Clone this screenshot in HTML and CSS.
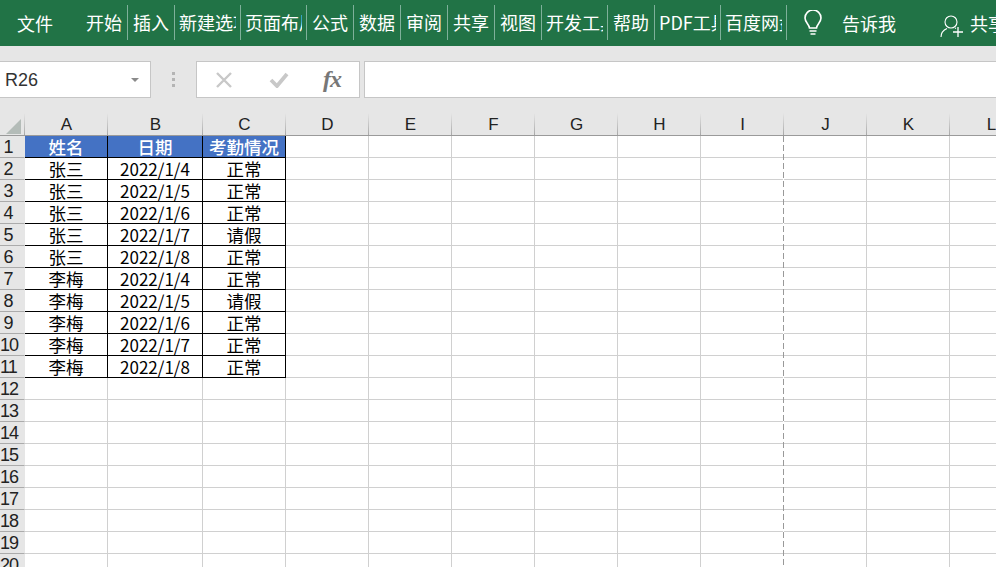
FILE: index.html
```html
<!DOCTYPE html>
<html lang="zh-CN">
<head>
<meta charset="utf-8">
<title>Excel</title>
<link rel="stylesheet" href="styles.css">
</head>
<body>
<header class="ribbon">
  <span class="file-tab">文件</span>
  <nav class="tabs">
    <span class="tab tab-w47"><span class="tab-label">开始</span></span>
    <span class="tab tab-w47"><span class="tab-label">插入</span></span>
    <span class="tab tab-w66"><span class="tab-label">新建选项卡</span></span>
    <span class="tab tab-w66"><span class="tab-label">页面布局</span></span>
    <span class="tab tab-w47"><span class="tab-label">公式</span></span>
    <span class="tab tab-w47"><span class="tab-label">数据</span></span>
    <span class="tab tab-w47"><span class="tab-label">审阅</span></span>
    <span class="tab tab-w47"><span class="tab-label">共享</span></span>
    <span class="tab tab-w47"><span class="tab-label">视图</span></span>
    <span class="tab tab-w66"><span class="tab-label">开发工具</span></span>
    <span class="tab tab-w47"><span class="tab-label">帮助</span></span>
    <span class="tab tab-w66"><span class="tab-label">PDF工具集</span></span>
    <span class="tab tab-w66"><span class="tab-label">百度网盘</span></span>
  </nav>
  <svg class="bulb" viewBox="0 0 20 26" width="20" height="26"><path d="M6.5 18c0-3.500-4.500-5.500-4.500-10a8 8 0 0 1 16 0c0 4.500-4.500 6.500-4.500 10z" fill="none" stroke="#fff" stroke-width="1.600"/><path d="M6.500 21h7M7.500 24h5" stroke="#fff" stroke-width="1.600"/></svg>
  <span class="tell">告诉我</span>
  <svg class="person" viewBox="0 0 24 24" width="24" height="24"><circle cx="11" cy="8" r="6" fill="none" stroke="#fff" stroke-width="1.100"/><path d="M1 23c0-4 2.500-7 6-8.500M15 14l1 .5" fill="none" stroke="#fff" stroke-width="1.100"/><path d="M13 18h10M18 13v10" stroke="#fff" stroke-width="1.300"/></svg>
  <span class="share">共享</span>
</header>
<section class="formula-area">
  <div class="name-box"><span class="name-text">R26</span><span class="caret"></span></div>
  <div class="grip"><i></i><i></i><i></i></div>
  <div class="fx-box">
    <svg class="fx-icon" viewBox="0 0 18 16" width="18" height="16"><path d="M2 1l14 14M16 1L2 15" stroke="#c8c8c8" stroke-width="2.400" fill="none"/></svg>
    <svg class="fx-icon" viewBox="0 0 20 16" width="20" height="16"><path d="M2 8l6 6L18 2" stroke="#c8c8c8" stroke-width="3.800" fill="none"/></svg>
    <span class="fx">fx</span>
  </div>
  <div class="formula-input"></div>
</section>
<main class="sheet">
  <table class="grid">
    <colgroup><col class="c-head"><col class="c-83"><col class="c-95"><col class="c-83"><col class="c-83"><col class="c-83"><col class="c-83"><col class="c-83"><col class="c-83"><col class="c-83"><col class="c-83"><col class="c-83"><col class="c-83"></colgroup>
    <thead><tr><th class="corner"><span class="tri"></span></th><th>A</th><th>B</th><th>C</th><th>D</th><th>E</th><th>F</th><th>G</th><th>H</th><th>I</th><th>J</th><th>K</th><th>L</th></tr></thead>
    <tbody>
      <tr><th>1</th><td class="d t">姓名</td><td class="d t">日期</td><td class="d t">考勤情况</td><td></td><td></td><td></td><td></td><td></td><td></td><td></td><td></td><td></td></tr>
      <tr><th>2</th><td class="d">张三</td><td class="d date">2022/1/4</td><td class="d">正常</td><td></td><td></td><td></td><td></td><td></td><td></td><td></td><td></td><td></td></tr>
      <tr><th>3</th><td class="d">张三</td><td class="d date">2022/1/5</td><td class="d">正常</td><td></td><td></td><td></td><td></td><td></td><td></td><td></td><td></td><td></td></tr>
      <tr><th>4</th><td class="d">张三</td><td class="d date">2022/1/6</td><td class="d">正常</td><td></td><td></td><td></td><td></td><td></td><td></td><td></td><td></td><td></td></tr>
      <tr><th>5</th><td class="d">张三</td><td class="d date">2022/1/7</td><td class="d">请假</td><td></td><td></td><td></td><td></td><td></td><td></td><td></td><td></td><td></td></tr>
      <tr><th>6</th><td class="d">张三</td><td class="d date">2022/1/8</td><td class="d">正常</td><td></td><td></td><td></td><td></td><td></td><td></td><td></td><td></td><td></td></tr>
      <tr><th>7</th><td class="d">李梅</td><td class="d date">2022/1/4</td><td class="d">正常</td><td></td><td></td><td></td><td></td><td></td><td></td><td></td><td></td><td></td></tr>
      <tr><th>8</th><td class="d">李梅</td><td class="d date">2022/1/5</td><td class="d">请假</td><td></td><td></td><td></td><td></td><td></td><td></td><td></td><td></td><td></td></tr>
      <tr><th>9</th><td class="d">李梅</td><td class="d date">2022/1/6</td><td class="d">正常</td><td></td><td></td><td></td><td></td><td></td><td></td><td></td><td></td><td></td></tr>
      <tr><th>10</th><td class="d">李梅</td><td class="d date">2022/1/7</td><td class="d">正常</td><td></td><td></td><td></td><td></td><td></td><td></td><td></td><td></td><td></td></tr>
      <tr><th>11</th><td class="d">李梅</td><td class="d date">2022/1/8</td><td class="d">正常</td><td></td><td></td><td></td><td></td><td></td><td></td><td></td><td></td><td></td></tr>
      <tr><th>12</th><td></td><td></td><td></td><td></td><td></td><td></td><td></td><td></td><td></td><td></td><td></td><td></td></tr>
      <tr><th>13</th><td></td><td></td><td></td><td></td><td></td><td></td><td></td><td></td><td></td><td></td><td></td><td></td></tr>
      <tr><th>14</th><td></td><td></td><td></td><td></td><td></td><td></td><td></td><td></td><td></td><td></td><td></td><td></td></tr>
      <tr><th>15</th><td></td><td></td><td></td><td></td><td></td><td></td><td></td><td></td><td></td><td></td><td></td><td></td></tr>
      <tr><th>16</th><td></td><td></td><td></td><td></td><td></td><td></td><td></td><td></td><td></td><td></td><td></td><td></td></tr>
      <tr><th>17</th><td></td><td></td><td></td><td></td><td></td><td></td><td></td><td></td><td></td><td></td><td></td><td></td></tr>
      <tr><th>18</th><td></td><td></td><td></td><td></td><td></td><td></td><td></td><td></td><td></td><td></td><td></td><td></td></tr>
      <tr><th>19</th><td></td><td></td><td></td><td></td><td></td><td></td><td></td><td></td><td></td><td></td><td></td><td></td></tr>
      <tr><th>20</th><td></td><td></td><td></td><td></td><td></td><td></td><td></td><td></td><td></td><td></td><td></td><td></td></tr>
    </tbody>
  </table>
  <div class="page-break"></div>
</main>
</body>
</html>
```
FILE: styles.css
```css
* { box-sizing: border-box; }
html, body { margin: 0; height: 567px; overflow: hidden; }
body { width: 996px; background: #e6e6e6; font-family: "Noto Sans CJK SC", "Liberation Sans", sans-serif; color: #000; }
.ribbon { height: 46px; background: #217346; color: #fff; display: flex; align-items: center; font-size: 18px; white-space: nowrap; overflow: hidden; }
.file-tab { width: 81px; padding-left: 17px; flex: none; margin-top: -1px; }
.tabs { display: flex; flex: none; height: 35px; margin-bottom: 1px; }
.tab { flex: none; height: 35px; line-height: 35px; border-right: 1px solid #7fb09a; padding: 0 4px 0 5px; }
.tab-label { display: block; overflow: hidden; height: 35px; }
.tab-w47 { width: 47px; }
.tab-w66 { width: 66px; padding-left: 4px; }
.bulb { flex: none; margin-left: 16px; margin-top: -1px; }
.tell { flex: none; margin-left: 19px; margin-top: -1px; }
.person { flex: none; margin-left: 44px; margin-top: 6px; }
.share { flex: none; margin-left: 6px; margin-top: -1px; }
.formula-area { height: 67px; padding-top: 15px; display: flex; align-items: flex-start; }
.name-box { width: 151px; height: 37px; background: #fff; border: 1px solid #c6c6c6; border-left: 0; display: flex; align-items: center; justify-content: space-between; padding: 2px 11px 0 5px; font-size: 18px; color: #333; font-family: "Liberation Sans", sans-serif; }
.caret { width: 0; height: 0; border: 4px solid transparent; border-top: 4px solid #8a8a8a; border-bottom: 0; margin-top: -2px; }
.grip { width: 45px; height: 37px; display: flex; flex-direction: column; align-items: center; justify-content: center; gap: 3px; }
.grip i { width: 3px; height: 3px; background: #b4b4b4; display: block; }
.fx-box { width: 164px; height: 37px; background: #fff; border: 1px solid #c6c6c6; display: flex; align-items: center; padding-left: 18px; }
.fx-box .fx-icon:nth-child(2) { margin-left: 36px; }
.fx { margin-left: 34px; font-family: "Liberation Serif", serif; font-style: italic; font-weight: bold; font-size: 24px; color: #777; letter-spacing: -1px; }
.formula-input { flex: 1; height: 37px; margin-left: 4px; background: #fff; border: 1px solid #c6c6c6; border-right: 0; }
.sheet { position: relative; height: 454px; overflow: hidden; background: #fff; }
.grid { table-layout: fixed; border-collapse: separate; border-spacing: 0; width: 1033px; font-size: 17.5px; }
.c-head { width: 25px; }
.c-83 { width: 83px; }
.c-95 { width: 95px; }
.grid th { background: #e6e6e6; font-weight: 400; padding: 0; height: 22px; border-bottom: 1px solid #ababab; color: #222; line-height: 19px; overflow: hidden; font-family: "Liberation Sans", sans-serif; text-align: center; }
.grid thead th { height: 23px; border-bottom: 1px solid #9a9a9a; background: linear-gradient(#e6e6e6, #a8a8a8) right top / 1px 100% no-repeat #e6e6e6; font-size: 17px; padding-top: 1px; }
.grid tbody th { font-size: 18px; letter-spacing: -1px; white-space: nowrap; padding-right: 8px; padding-top: 2px; border-right: 1px solid #e6e6e6; }
.tri { display: block; width: 0; height: 0; border-style: solid; border-width: 0 0 15px 15px; border-color: transparent transparent #b4bcb8 transparent; margin: 4px 0 0 6px; }
.grid td { padding: 0; height: 22px; border-right: 1px solid #d0d0d0; border-bottom: 1px solid #d0d0d0; text-align: center; line-height: 20px; overflow: hidden; white-space: nowrap; }
.grid td.d { border-right-color: #000; border-bottom-color: #000; }
.grid td.t { background: #4472c4; color: #fff; font-weight: 500; }
.grid td.date { font-size: 17px; }
.page-break { position: absolute; left: 783px; top: 23px; bottom: 0; width: 1px; background: repeating-linear-gradient(to bottom, #999 0 6px, #fff 6px 9px); }
```
